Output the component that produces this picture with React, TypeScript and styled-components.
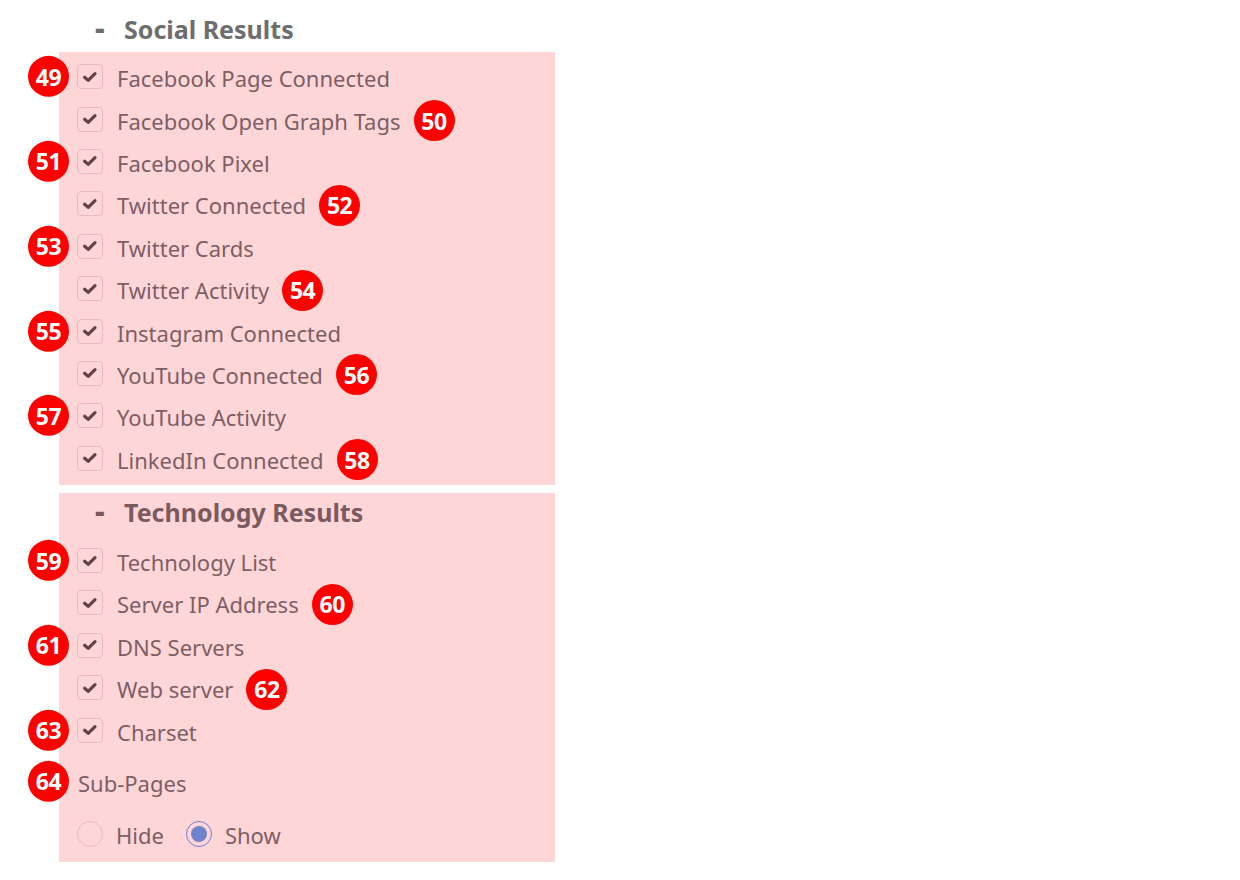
import styled, { createGlobalStyle } from 'styled-components';

const GlobalStyle = createGlobalStyle`
  body {
    margin: 0;
    background: #ffffff;
    font-family: 'Noto Sans', 'Open Sans', sans-serif;
  }
`;

interface Item {
  label: string;
  badge: number;
  side: 'left' | 'right';
}

const socialItems: Item[] = [
  { label: 'Facebook Page Connected', badge: 49, side: 'left' },
  { label: 'Facebook Open Graph Tags', badge: 50, side: 'right' },
  { label: 'Facebook Pixel', badge: 51, side: 'left' },
  { label: 'Twitter Connected', badge: 52, side: 'right' },
  { label: 'Twitter Cards', badge: 53, side: 'left' },
  { label: 'Twitter Activity', badge: 54, side: 'right' },
  { label: 'Instagram Connected', badge: 55, side: 'left' },
  { label: 'YouTube Connected', badge: 56, side: 'right' },
  { label: 'YouTube Activity', badge: 57, side: 'left' },
  { label: 'LinkedIn Connected', badge: 58, side: 'right' },
];

const techItems: Item[] = [
  { label: 'Technology List', badge: 59, side: 'left' },
  { label: 'Server IP Address', badge: 60, side: 'right' },
  { label: 'DNS Servers', badge: 61, side: 'left' },
  { label: 'Web server', badge: 62, side: 'right' },
  { label: 'Charset', badge: 63, side: 'left' },
];

const Page = styled.div`
  padding: 10px 0 20px 59px;
  width: 496px;
  display: flex;
  flex-direction: column;
`;

const Highlight = styled.div<{ $top?: number; $bottom?: number }>`
  background: #ffd6d8;
  display: flex;
  flex-direction: column;
  padding-top: ${(p) => p.$top ?? 0}px;
  padding-bottom: ${(p) => p.$bottom ?? 0}px;
`;

const Gap = styled.div<{ $h: number }>`
  height: ${(p) => p.$h}px;
`;

const Header = styled.div<{ $tinted?: boolean }>`
  box-sizing: border-box;
  height: 42px;
  padding-bottom: 4px;
  display: flex;
  align-items: center;
  padding-left: 36px;
  font-size: 25px;
  font-weight: 700;
  color: ${(p) => (p.$tinted ? '#7a5a5f' : '#6e6e6e')};
`;

const Dash = styled.span`
  width: 29px;
  margin-top: -2px;
  font-size: 30px;
  font-weight: 800;
  line-height: 1;
`;

const Row = styled.div<{ $h?: number }>`
  position: relative;
  height: ${(p) => p.$h ?? 42.4}px;
  display: flex;
  align-items: center;
  padding-left: 18px;
`;

const CheckBox = styled.span`
  box-sizing: border-box;
  width: 26px;
  height: 25px;
  margin-top: -3px;
  margin-right: 14px;
  border: 1px solid #e6bcc0;
  border-radius: 4px;
  display: flex;
  align-items: center;
  justify-content: center;
`;

const Label = styled.span`
  font-size: 22px;
  color: #7d5e64;
`;

const Badge = styled.span`
  width: 41px;
  height: 41px;
  border-radius: 50%;
  background: #ff0000;
  color: #ffffff;
  font-family: 'Noto Sans', sans-serif;
  font-weight: 700;
  font-size: 23px;
  letter-spacing: -0.5px;
  display: flex;
  align-items: center;
  justify-content: center;
  flex-shrink: 0;
`;

const SideBadge = styled(Badge)`
  position: absolute;
  left: -31px;
  top: 50%;
  transform: translateY(-54%);
`;

const InlineBadge = styled(Badge)`
  margin-left: 13px;
`;

const PlainLabel = styled(Label)`
  margin-left: 1px;
`;

const RadioGroup = styled.div`
  display: flex;
  align-items: center;
`;

const RadioCircle = styled.span<{ $on?: boolean }>`
  box-sizing: border-box;
  width: 26px;
  height: 26px;
  border-radius: 50%;
  margin-top: -2px;
  margin-right: 13px;
  border: 1px solid ${(p) => (p.$on ? '#6f80d2' : '#e6bcc0')};
  display: flex;
  align-items: center;
  justify-content: center;

  &::after {
    content: '';
    display: ${(p) => (p.$on ? 'block' : 'none')};
    width: 16px;
    height: 16px;
    border-radius: 50%;
    background: #6f83cf;
  }
`;

const RadioOption = styled.span`
  display: flex;
  align-items: center;
  margin-right: 22px;
`;

function Check() {
  return (
    <CheckBox>
      <svg width="16" height="14" viewBox="0 0 16 14">
        <path
          d="M2.6 7.2 L6.2 10.4 L13 3.6"
          fill="none"
          stroke="#654249"
          strokeWidth="3.2"
          strokeLinecap="round"
          strokeLinejoin="round"
        />
      </svg>
    </CheckBox>
  );
}

function CheckRow({ item }: { item: Item }) {
  return (
    <Row>
      {item.side === 'left' && <SideBadge>{item.badge}</SideBadge>}
      <Check />
      <Label>{item.label}</Label>
      {item.side === 'right' && <InlineBadge>{item.badge}</InlineBadge>}
    </Row>
  );
}

export default function App() {
  return (
    <>
      <GlobalStyle />
      <Page>
        <Header>
          <Dash>-</Dash>
          Social Results
        </Header>
        <Highlight $top={5} $bottom={4}>
          {socialItems.map((item) => (
            <CheckRow key={item.badge} item={item} />
          ))}
        </Highlight>
        <Gap $h={8} />
        <Highlight $bottom={6}>
          <Header $tinted>
            <Dash>-</Dash>
            Technology Results
          </Header>
          <Gap $h={6} />
          {techItems.map((item) => (
            <CheckRow key={item.badge} item={item} />
          ))}
          <Gap $h={9} />
          <Row $h={42}>
            <SideBadge>64</SideBadge>
            <PlainLabel>Sub-Pages</PlainLabel>
          </Row>
          <Gap $h={10} />
          <Row $h={42}>
            <RadioGroup>
              <RadioOption>
                <RadioCircle />
                <Label>Hide</Label>
              </RadioOption>
              <RadioOption>
                <RadioCircle $on />
                <Label>Show</Label>
              </RadioOption>
            </RadioGroup>
          </Row>
        </Highlight>
      </Page>
    </>
  );
}
